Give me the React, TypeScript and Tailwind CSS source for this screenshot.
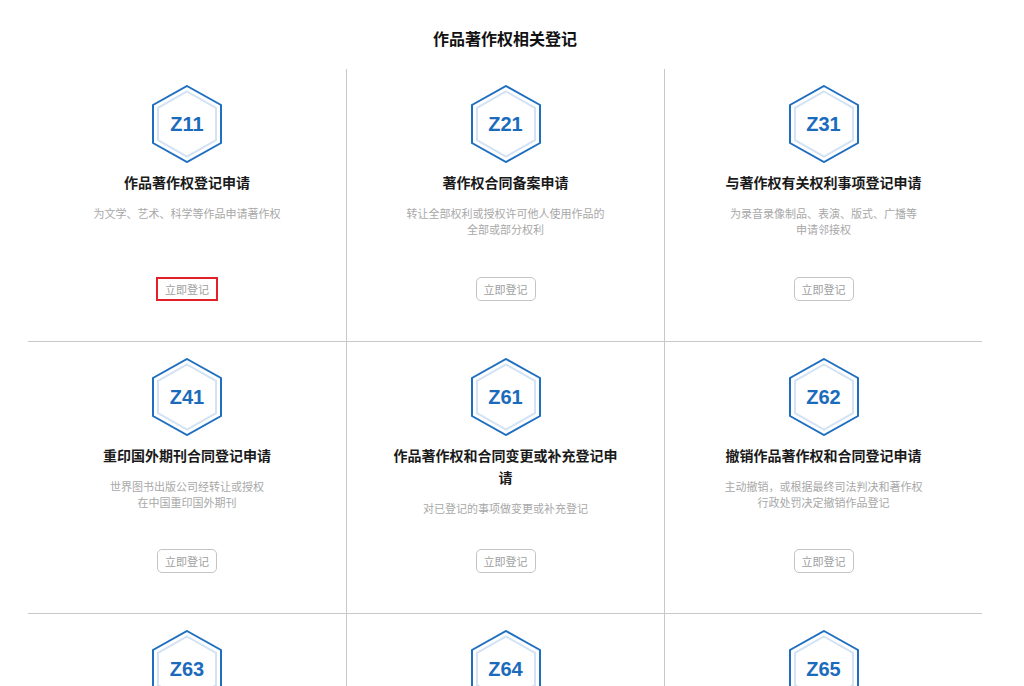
const items = [
  { code: 'Z11', title: '作品著作权登记申请', desc: ['为文学、艺术、科学等作品申请著作权'] },
  { code: 'Z21', title: '著作权合同备案申请', desc: ['转让全部权利或授权许可他人使用作品的', '全部或部分权利'] },
  { code: 'Z31', title: '与著作权有关权利事项登记申请', desc: ['为录音录像制品、表演、版式、广播等', '申请邻接权'] },
  { code: 'Z41', title: '重印国外期刊合同登记申请', desc: ['世界图书出版公司经转让或授权', '在中国重印国外期刊'] },
  { code: 'Z61', title: '作品著作权和合同变更或补充登记申请', desc: ['对已登记的事项做变更或补充登记'] },
  { code: 'Z62', title: '撤销作品著作权和合同登记申请', desc: ['主动撤销，或根据最终司法判决和著作权', '行政处罚决定撤销作品登记'] },
  { code: 'Z63', title: '作品登记证书补发或换发申请', desc: ['登记证书遗失、损坏时申请补发或换发'] },
  { code: 'Z64', title: '作品登记证书更正申请', desc: ['对登记证书中记载的错误事项申请更正'] },
  { code: 'Z65', title: '登记事项查询申请', desc: ['查询已登记作品的相关登记信息'] },
];

function Hexagon({ code }: { code: string }) {
  return (
    <div className="relative w-[70px] h-[78px] flex items-center justify-center">
      <svg className="absolute inset-0" width="70" height="78" viewBox="0 0 70 78">
        <polygon points="35,1 69,20 69,58 35,77 1,58 1,20" fill="none" stroke="#1f6fc1" strokeWidth="2" />
        <polygon points="35,6.5 64,22.8 64,55.2 35,71.5 6,55.2 6,22.8" fill="none" stroke="#d3e3f3" strokeWidth="2" />
      </svg>
      <span className="relative text-[20px] font-bold text-[#1b6bbd] font-['Liberation_Sans',Arial,sans-serif]">{code}</span>
    </div>
  );
}

export default function App() {
  return (
    <div className="min-h-screen bg-white font-['Noto_Sans_CJK_SC','Noto_Sans',sans-serif]">
      <div className="ml-[28px] w-[954px]">
        <h1 className="pt-[26px] pb-[19px] text-center text-[16px] leading-[24px] font-bold text-[#111]">
          作品著作权相关登记
        </h1>
        <div className="grid grid-cols-3">
          {items.map((it, i) => (
            <div
              key={it.code}
              className={`flex flex-col items-center h-[272px] pt-[16px] pb-[40px] border-[#c8c8c8] ${i % 3 !== 0 ? 'border-l' : ''} ${i >= 3 ? 'border-t' : ''}`}
            >
              <Hexagon code={it.code} />
              <h3 className="mt-[8px] max-w-[232px] text-center text-[14px] leading-[22px] font-bold text-[#1a1a1a]">
                {it.title}
              </h3>
              <p className="mt-[12px] text-center text-[11px] leading-[16px] text-[#a8a8a8]">
                {it.desc.map((line) => (
                  <span key={line} className="block">{line}</span>
                ))}
              </p>
              <button
                className={
                  i === 0
                    ? 'mt-auto h-[24px] px-[7px] border-2 border-[#e3202a] text-[11px] text-[#a0a0a0] bg-white'
                    : 'mt-auto h-[24px] px-[7px] border border-[#c4c4c4] rounded-[5px] text-[11px] text-[#a0a0a0] bg-white'
                }
              >
                立即登记
              </button>
            </div>
          ))}
        </div>
      </div>
    </div>
  );
}
